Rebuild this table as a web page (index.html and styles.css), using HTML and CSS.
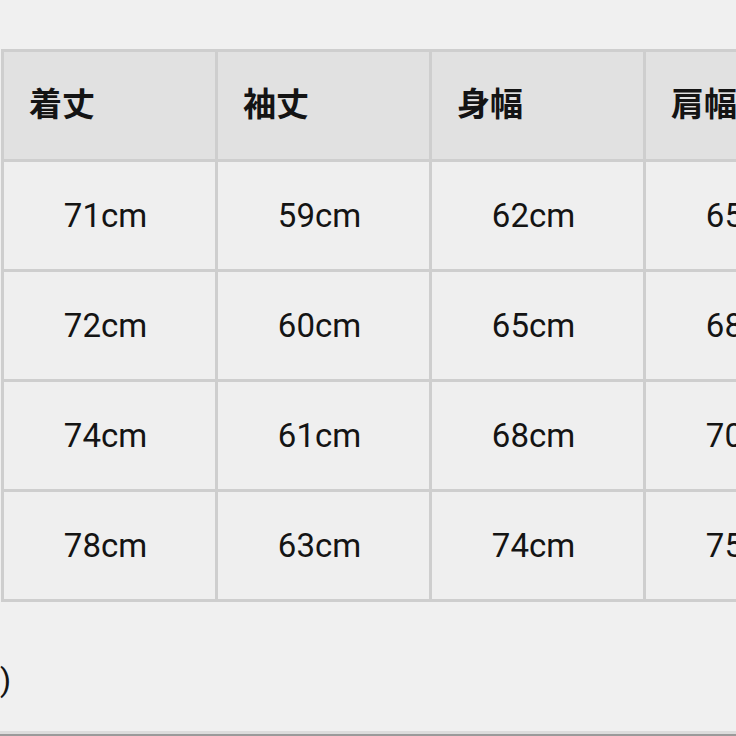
FILE: index.html
```html
<!DOCTYPE html>
<html lang="ja">
<head>
<meta charset="utf-8">
<link rel="stylesheet" href="styles.css">
</head>
<body>
<div class="page">
  <div class="table">
    <div class="cell head">着丈</div>
    <div class="cell head">袖丈</div>
    <div class="cell head">身幅</div>
    <div class="cell head">肩幅</div>

    <div class="cell">71cm</div>
    <div class="cell">59cm</div>
    <div class="cell">62cm</div>
    <div class="cell">65cm</div>

    <div class="cell">72cm</div>
    <div class="cell">60cm</div>
    <div class="cell">65cm</div>
    <div class="cell">68cm</div>

    <div class="cell">74cm</div>
    <div class="cell">61cm</div>
    <div class="cell">68cm</div>
    <div class="cell">70cm</div>

    <div class="cell">78cm</div>
    <div class="cell">63cm</div>
    <div class="cell">74cm</div>
    <div class="cell">75cm</div>
  </div>
  <p class="note">)</p>
</div>
<div class="bottom-bar"></div>
</body>
</html>
```
FILE: styles.css
```css
html, body {
  margin: 0;
  padding: 0;
}
body {
  width: 736px;
  height: 736px;
  overflow: hidden;
  background: #f0f0f0;
  font-family: Roboto, "Noto Sans CJK JP", sans-serif;
  color: #141414;
  display: flex;
  flex-direction: column;
}
.page {
  flex: 1;
  overflow: hidden;
}
.table {
  margin-top: 49px;
  margin-left: 1px;
  display: grid;
  grid-template-columns: repeat(4, 211px);
  grid-auto-rows: 107px;
  gap: 3px;
  padding: 3px;
  background: #cecece;
  width: max-content;
}
.cell {
  background: #efefef;
  display: flex;
  align-items: center;
  justify-content: center;
  padding-right: 8px;
  font-size: 33px;
}
.cell.head {
  background: #e1e1e1;
  justify-content: flex-start;
  padding: 0 0 8px 25px;
  font-family: "Noto Sans CJK JP", sans-serif;
  font-weight: 700;
  font-size: 33px;
}
.note {
  margin: 58px 0 0 0;
  font-size: 32px;
  line-height: 40px;
  color: #141414;
}
.bottom-bar {
  height: 3px;
  background: #dcdcdc;
  border-bottom: 2px solid #9a9a9a;
}
```
